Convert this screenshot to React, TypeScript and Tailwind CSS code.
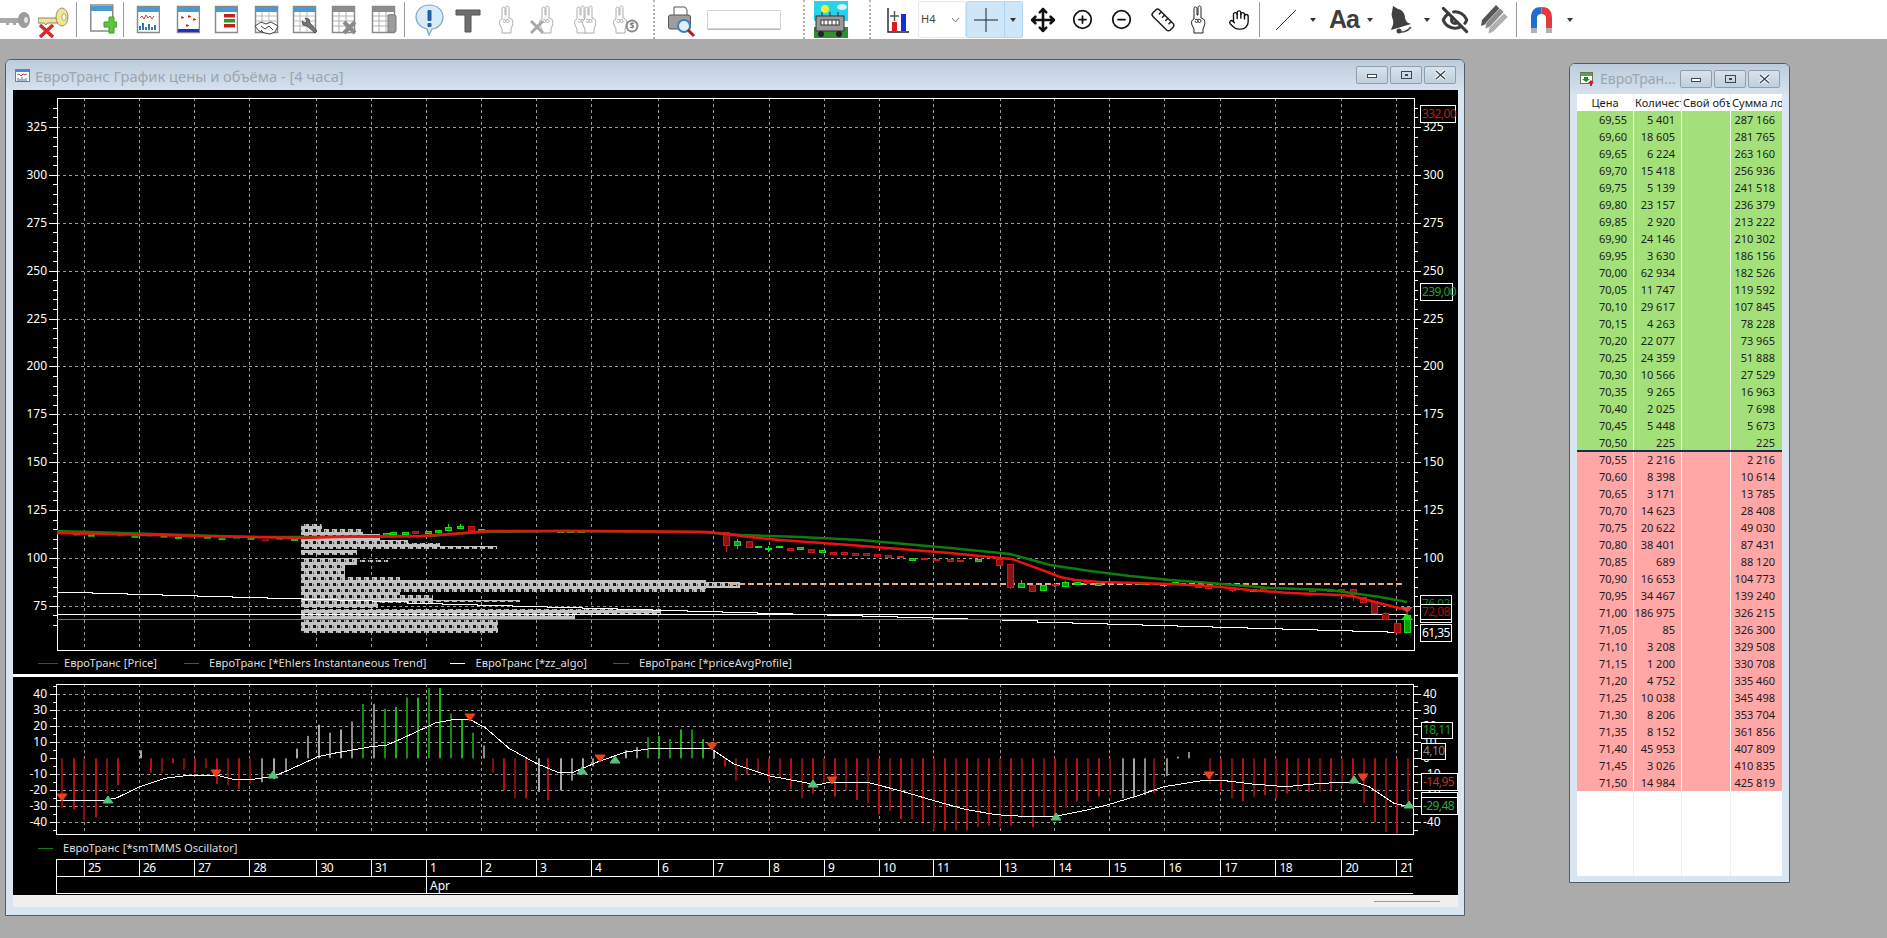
import { CircleMinus, CirclePlus, EyeOff, Hand, Move, Ruler } from "lucide-react";

const font = { fontFamily: '"Noto Sans", sans-serif' };

const gridX = [84, 139, 194, 249.5, 316.5, 371, 426, 481, 536, 591, 658, 713, 769, 824, 879, 933, 1000, 1054.5, 1109.5, 1164.5, 1220.5, 1275.5, 1341.5, 1396.5];
const dayLabels = ["25", "26", "27", "28", "30", "31", "1", "2", "3", "4", "6", "7", "8", "9", "10", "11", "13", "14", "15", "16", "17", "18", "20", "21"];

const priceY = (v: number) => 127 + (325 - v) * 1.915;
const oscY = (v: number) => 758.3 - v * 1.6;

const pts = (list: number[][]) => list.map(p => p.join(",")).join(" ");

const redLine = [[57, 533], [200, 536], [302, 538], [334, 537], [420, 536], [450, 534], [490, 531], [600, 531], [710, 532], [750, 537], [780, 540], [850, 545], [900, 549], [950, 553], [1000, 558], [1012, 559], [1050, 573], [1060, 577], [1075, 580], [1100, 582], [1170, 584], [1210, 586], [1250, 590], [1290, 593], [1340, 595], [1352, 596], [1375, 602], [1407, 610]];
const greenLine = [[57, 531], [250, 537], [302, 537], [430, 536], [480, 532], [560, 531], [700, 532], [740, 535], [800, 537], [860, 540], [950, 548], [1010, 554], [1050, 565], [1090, 571], [1130, 576], [1170, 580], [1210, 583], [1270, 588], [1330, 590], [1380, 597], [1407, 602]];

// stepped zz_algo line
const zzLine = (() => {
  const out: number[][] = [];
  for (let x = 57; x < 1400; x += 35) {
    const y = Math.round(592 + ((x - 57) / 1343) * 40.5);
    out.push([x, y], [Math.min(x + 35, 1400), y]);
  }
  return out;
})();

// [x, top, bottom, wickTop, wickBottom, kind]
type Candle = [number, number, number, number, number, "g" | "r"];
const candles: Candle[] = [
  [386, 533, 535, 533, 535, "g"], [393, 532, 534, 532, 534, "g"], [405, 532, 534, 532, 534, "g"], [415, 531, 533, 531, 533, "r"],
  [428, 531, 533, 531, 533, "g"], [438, 530, 532, 530, 532, "g"], [448, 527, 530, 524, 530, "g"], [460, 526, 528, 524, 528, "g"],
  [471, 526, 530, 526, 530, "r"], [481, 529, 531, 529, 531, "g"], [560, 531, 532, 531, 532, "g"], [570, 530, 532, 530, 532, "g"], [581, 530, 532, 530, 532, "g"],
  [726, 532, 545, 532, 552, "r"], [737, 541, 545, 539, 549, "g"], [749, 541, 547, 541, 547, "r"], [758, 546, 547, 546, 547, "g"], [768, 548, 549, 546, 552, "g"], [779, 546, 547, 546, 547, "g"],
  [790, 548, 550, 548, 550, "r"], [800, 547, 549, 547, 549, "g"], [811, 549, 552, 549, 552, "r"], [822, 550, 552, 550, 552, "g"], [833, 552, 554, 552, 554, "r"], [844, 552, 554, 552, 554, "r"],
  [855, 553, 555, 553, 555, "r"], [866, 553, 555, 553, 555, "r"], [877, 554, 556, 554, 556, "r"], [888, 555, 557, 555, 557, "r"], [900, 556, 557, 556, 557, "r"],
  [912, 558, 560, 558, 560, "g"], [924, 558, 559, 558, 559, "r"], [936, 559, 560, 559, 560, "r"], [950, 559, 561, 559, 561, "r"], [960, 560, 561, 560, 561, "r"], [978, 559, 561, 559, 561, "g"],
  [999, 559, 565, 559, 565, "r"], [1010, 564, 587, 564, 589, "r"], [1021, 583, 587, 580, 588, "g"], [1032, 585, 591, 585, 591, "r"], [1043, 585, 590, 585, 590, "g"],
  [1055, 584, 585, 583, 591, "r"], [1065, 582, 586, 581, 587, "g"], [1077, 582, 584, 582, 584, "g"], [1087, 581, 583, 581, 583, "r"], [1098, 583, 585, 583, 585, "g"],
  [1141, 582, 584, 582, 584, "g"], [1163, 583, 585, 583, 585, "g"], [1175, 582, 584, 582, 584, "g"], [1198, 585, 587, 585, 587, "r"], [1208, 586, 588, 586, 588, "r"],
  [1232, 587, 590, 587, 592, "r"], [1253, 589, 591, 589, 591, "g"], [1263, 588, 590, 588, 590, "r"], [1312, 589, 591, 589, 591, "r"], [1330, 589, 591, 589, 591, "r"], [1341, 589, 591, 589, 591, "r"],
  [1353, 589, 594, 589, 601, "r"], [1363, 597, 602, 597, 602, "r"], [1374, 601, 613, 601, 613, "r"], [1385, 613, 619, 612, 619, "r"], [1397, 623, 632, 623, 632, "r"], [1407, 615, 632, 615, 632, "g"],
];

// [y, height, right edge]
const profile = [
  [524, 5, 322], [529, 5, 363], [534, 6, 380], [540, 3, 408], [543, 3, 440], [546, 3, 497], [550, 5, 357],
  [558, 7, 357], [560, 2, 388], [565, 12, 345], [577, 3, 400], [580, 12, 706], [582, 6, 740], [592, 3, 400],
  [595, 8, 433], [600, 2, 520], [603, 5, 378], [609, 6, 661], [615, 5, 575], [620, 13, 498],
];

// [x, value, kind]
const oscBars: [number, number, string][] = [
  [61, -31, "r"], [73, -32, "r"], [83, -39, "r"], [95, -37, "r"], [106, -22, "r"], [117, -17, "r"], [140, 5, "a"], [150, -9, "r"], [161, -9, "r"], [172, -3, "r"], [183, -7, "r"], [194, -9, "r"],
  [205, -6, "r"], [216, -16, "r"], [227, -17, "r"], [238, -19, "r"], [249, -16, "r"], [261, -15, "a"], [273, -13, "a"], [285, -8, "a"], [296, 6, "a"], [307, 14, "a"], [318, 21, "a"], [329, 16, "a"],
  [340, 18, "a"], [351, 23, "a"], [362, 34, "g"], [373, 34, "a"], [384, 31, "g"], [395, 32, "g"], [406, 38, "g"], [417, 38, "g"], [428, 44, "g"], [439, 44, "g"], [450, 28, "g"], [461, 24, "g"],
  [472, 16, "g"], [483, 8, "a"], [492, -9, "r"], [503, -20, "r"], [514, -25, "r"], [525, -25, "r"], [538, -21, "a"], [547, -26, "r"], [560, -20, "a"], [571, -14, "a"], [582, -8, "a"], [592, -5, "a"],
  [625, 5, "a"], [636, 7, "a"], [647, 13, "g"], [658, 14, "g"], [669, 12, "g"], [680, 18, "g"], [691, 18, "g"], [702, 12, "g"], [713, 5, "a"],
  [724, -5, "r"], [735, -14, "r"], [746, -10, "r"], [757, -9, "r"], [768, -14, "r"], [779, -12, "r"], [790, -19, "r"], [801, -25, "r"], [812, -22, "r"], [823, -16, "r"], [834, -24, "r"], [845, -20, "r"],
  [856, -26, "r"], [867, -28, "r"], [878, -35, "r"], [889, -33, "r"], [900, -38, "r"], [911, -38, "r"], [922, -40, "r"], [933, -45, "r"], [944, -45, "r"], [955, -45, "r"], [966, -45, "r"], [977, -43, "r"],
  [988, -42, "r"], [999, -43, "r"], [1010, -42, "r"], [1021, -37, "r"], [1032, -43, "r"], [1043, -36, "r"], [1054, -36, "r"], [1065, -31, "r"], [1076, -27, "r"], [1087, -27, "r"], [1098, -24, "r"], [1109, -23, "r"],
  [1122, -25, "a"], [1133, -24, "a"], [1144, -23, "a"], [1153, -22, "r"], [1166, -11, "a"], [1177, 1, "a"], [1188, 4, "a"], [1209, -16, "r"], [1220, -20, "r"], [1231, -25, "r"], [1242, -27, "r"], [1253, -24, "r"],
  [1264, -23, "r"], [1275, -25, "r"], [1286, -22, "r"], [1297, -20, "r"], [1308, -21, "r"], [1319, -21, "r"], [1330, -20, "r"], [1341, -17, "r"], [1352, -16, "r"], [1363, -28, "r"], [1374, -40, "r"], [1385, -46, "r"], [1396, -47, "r"], [1407, -27, "r"],
];

const oscLine = [
  [56, 800.7], [107, 800], [117, 797.7], [140, 786.7], [165, 778.3], [191, 775], [216, 775], [233, 779.3], [253, 779.3], [272, 776.7], [285, 771.7], [318, 756.7], [337, 752.7], [371, 746.7], [387, 745],
  [406, 736.7], [436, 722.7], [457, 719], [471, 720], [486, 728.3], [509, 748.3], [536, 763.3], [559, 772.7], [572, 772.7], [600, 761], [626, 752], [656, 748], [710, 748], [734, 764], [770, 776], [818, 785], [830, 782], [866, 782], [900, 790.7],
  [934, 800.7], [965, 809.3], [996, 814.7], [1030, 816.7], [1057, 816], [1084, 810.7], [1107, 805], [1137, 796], [1164, 786.7], [1206, 780], [1225, 780.7], [1252, 784], [1286, 786.7], [1321, 783.3], [1355, 782], [1369, 786.7], [1394, 803.3], [1409, 806.7],
];

const downMarks = [[62, 799], [216, 775], [470, 719], [600, 760], [712, 748], [832, 782], [1209, 777], [1363, 779]];
const upMarks = [[108, 802], [273, 777], [582, 773], [615, 762], [813, 786], [1056, 819], [1354, 782], [1409, 807]];

function Grid({ lines, yTop, yBottom, values, toY }: { lines: number[]; yTop: number; yBottom: number; values: number[]; toY: (v: number) => number }) {
  return (
    <g stroke="#9c9c9c" strokeWidth="1" strokeDasharray="3 3" shapeRendering="crispEdges">
      {lines.map(x => <line key={x} x1={x} x2={x} y1={yTop} y2={yBottom} />)}
      {values.map(v => <line key={v} x1={57} x2={1414} y1={Math.round(toY(v))} y2={Math.round(toY(v))} />)}
    </g>
  );
}

function Tag({ x, y, w, h, text, color }: { x: number; y: number; w: number; h: number; text: string; color: string }) {
  return (
    <g>
      <rect x={x + 0.5} y={y + 0.5} width={w} height={h} fill="#000" stroke="#fff" />
      <text x={x + 2} y={y + h / 2 + 4} fill={color} fontSize="12" letterSpacing="-0.6">{text}</text>
    </g>
  );
}

function PriceChart() {
  const ticks: number[] = [];
  for (let v = 335; v >= 65; v -= 5) ticks.push(v);
  const labels = [325, 300, 275, 250, 225, 200, 175, 150, 125, 100, 75];
  return (
    <svg width="1445" height="561" viewBox="13 90 1445 561" className="block shrink-0" style={font}>
      <defs>
        <pattern id="dots" width="8" height="12" patternUnits="userSpaceOnUse">
          <rect width="8" height="12" fill="#c2c2c2" />
          <rect x="1" y="1" width="3" height="3" fill="#161616" />
          <rect x="5" y="7" width="3" height="3" fill="#161616" />
          <rect x="5" y="2" width="1" height="2" fill="#5a5a5a" />
          <rect x="1" y="8" width="1" height="2" fill="#5a5a5a" />
        </pattern>
      </defs>
      <Grid lines={gridX} yTop={98} yBottom={650} values={labels} toY={priceY} />
      {profile.map(([y, h, r]) => <rect key={`${y}-${r}`} x={301} y={y} width={r - 301} height={h} fill="url(#dots)" />)}
      <rect x="57" y="98" width="1357" height="552" fill="none" stroke="#fff" strokeWidth="1" shapeRendering="crispEdges" />
      {ticks.map(v => {
        const y = Math.round(priceY(v));
        const big = v % 25 === 0;
        return (
          <g key={v} stroke="#fff" shapeRendering="crispEdges">
            <line x1={big ? 49 : 53} x2={57} y1={y} y2={y} />
            <line x1={1414} x2={big ? 1421 : 1418} y1={y} y2={y} />
          </g>
        );
      })}
      {labels.map(v => (
        <g key={v} fill="#fff" fontSize="12">
          <text x={47} y={priceY(v) + 4} textAnchor="end">{v}</text>
          <text x={1423} y={priceY(v) + 4}>{v}</text>
        </g>
      ))}
      <polyline points={pts(zzLine)} fill="none" stroke="#fff" strokeWidth="1" shapeRendering="crispEdges" />
      <line x1="57" x2="1408" y1="614.5" y2="614.5" stroke="#fff" />
      <line x1="57" x2="1408" y1="619.5" y2="619.5" stroke="#22b022" />
      <line x1="730" x2="1403" y1="584" y2="584" stroke="#eda77c" strokeWidth="2" strokeDasharray="6 3" />
      {Array.from({ length: 17 }, (_, i) => 62 + i * 14.5).map((x, i) => (
        <rect key={x} x={x - 3} y={532 + (i * 3) / 8 + (i % 3)} width="7" height="2" fill={i % 5 === 4 ? "#a01515" : "#12c012"} />
      ))}
      {candles.map(([x, t, b, wt, wb, k]) => (
        <g key={`${x}-${t}`} stroke={k === "g" ? "#16e016" : "#d01818"} shapeRendering="crispEdges">
          <line x1={x} x2={x} y1={wt} y2={wb} />
          <rect x={x - 3} y={t} width="6" height={b - t} fill={k === "g" ? "#119a11" : "#8e1010"} />
        </g>
      ))}
      <polyline points={pts(greenLine)} fill="none" stroke="#0f7c0f" strokeWidth="2.5" />
      <polyline points={pts(redLine)} fill="none" stroke="#ee1111" strokeWidth="2.5" />
      <polygon points="1401,607 1413,607 1407,613" fill="#e83a2c" />
      <polygon points="1407,613 1401,620 1413,620" fill="#18e018" />
      <Tag x={1420} y={105} w={35} h={17} text="332,00" color="#c41a10" />
      <Tag x={1420} y={283} w={32} h={17} text="239,00" color="#22a022" />
      <Tag x={1420} y={595} w={31} h={17} text="76,92" color="#0f7c0f" />
      <Tag x={1420} y={604} w={31} h={15} text="72,08" color="#b01010" />
      <rect x="1420.5" y="619.5" width="31" height="3" fill="#000" stroke="#fff" />
      <Tag x={1420} y={624} w={31} h={17} text="61,35" color="#fff" />
    </svg>
  );
}

function OscChart() {
  const ticks: number[] = [];
  for (let v = 45; v >= -45; v -= 5) ticks.push(v);
  const labels = [40, 30, 20, 10, 0, -10, -20, -30, -40];
  return (
    <svg width="1445" height="161" viewBox="13 677 1445 161" className="block shrink-0" style={font}>
      <Grid lines={gridX} yTop={684} yBottom={834} values={labels.filter(v => v !== 0)} toY={oscY} />
      {oscBars.map(([x, v, k], i) => (
        <rect
          key={x}
          x={x}
          y={Math.min(oscY(v), oscY(0))}
          width="2"
          height={Math.abs(v) * 1.6}
          fill={k === "r" ? (i % 2 ? "#b81010" : "#820f0f") : k === "g" ? (i % 2 ? "#10b810" : "#148c14") : i % 2 ? "#8a8a8a" : "#a6a6a6"}
        />
      ))}
      <rect x="56.5" y="684.5" width="1357" height="150" fill="none" stroke="#fff" shapeRendering="crispEdges" />
      {ticks.map(v => {
        const y = Math.round(oscY(v));
        const big = v % 10 === 0;
        return (
          <g key={v} stroke="#fff" shapeRendering="crispEdges">
            <line x1={big ? 50 : 53} x2={57} y1={y} y2={y} />
            <line x1={1414} x2={big ? 1421 : 1418} y1={y} y2={y} />
          </g>
        );
      })}
      {labels.map(v => (
        <g key={v} fill="#fff" fontSize="12">
          <text x={47} y={oscY(v) + 4} textAnchor="end">{v}</text>
          <text x={1423} y={oscY(v) + 4}>{v}</text>
        </g>
      ))}
      <polyline points={pts(oscLine)} fill="none" stroke="#fff" strokeWidth="1" shapeRendering="crispEdges" />
      {downMarks.map(([x, y]) => <polygon key={x} points={`${x - 5},${y - 5} ${x + 5},${y - 5} ${x},${y + 2}`} fill="#f0401a" stroke="#f0401a" />)}
      {upMarks.map(([x, y]) => <polygon key={x} points={`${x},${y - 6} ${x - 5},${y + 1} ${x + 5},${y + 1}`} fill="#52c47c" stroke="#52c47c" />)}
      <Tag x={1421} y={722} w={31} h={16} text="18,11" color="#14a014" />
      <Tag x={1421} y={743} w={24} h={16} text="4,10" color="#8a8a8a" />
      <Tag x={1421} y={773} w={36} h={17} text="-14,95" color="#c8301c" />
      <rect x="1421.5" y="792.5" width="36" height="6" fill="#000" stroke="#fff" />
      <Tag x={1421} y={797} w={36} h={17} text="-29,48" color="#2fa84a" />
    </svg>
  );
}

function DateScale() {
  return (
    <svg width="1445" height="36" viewBox="13 859 1445 36" className="block shrink-0" style={font}>
      <g stroke="#fff" shapeRendering="crispEdges">
        <line x1="56" x2="1413" y1="859.5" y2="859.5" />
        <line x1="56" x2="1413" y1="876.5" y2="876.5" />
        <line x1="56" x2="1413" y1="893.5" y2="893.5" />
        <line x1="56.5" x2="56.5" y1="859" y2="894" />
        <line x1="426" x2="426" y1="876" y2="894" />
        {gridX.map(x => <line key={x} x1={x} x2={x} y1="859" y2="877" />)}
      </g>
      {dayLabels.map((d, i) => (
        <text key={d} x={gridX[i] + 4} y={872} fill="#fff" fontSize="12" letterSpacing="-0.6">{d}</text>
      ))}
      <text x="430" y="890" fill="#fff" fontSize="12">Apr</text>
    </svg>
  );
}

function Legend({ children, className }: { children: React.ReactNode; className: string }) {
  return <div className={`flex shrink-0 items-center text-[11.2px] text-[#dedede] ${className}`} style={font}>{children}</div>;
}

function WinButton({ children }: { children: React.ReactNode }) {
  return (
    <div className="flex h-[18px] w-[32px] items-center justify-center rounded-[2px] border border-[#8f9fae] bg-gradient-to-b from-[#d8e2ec] to-[#c0cfdd]">
      {children}
    </div>
  );
}

function WinButtons() {
  return (
    <div className="flex shrink-0 gap-[2px]">
      <WinButton><div className="mt-[2px] h-[4px] w-[10px] border border-[#3a4652] bg-white" /></WinButton>
      <WinButton><div className="flex h-[8px] w-[11px] items-center justify-center border border-[#3a4652]"><div className="h-[2px] w-[3px] bg-[#3a4652]" /></div></WinButton>
      <WinButton>
        <svg width="13" height="10" viewBox="0 0 13 10"><path d="M2 1l9 8M11 1L2 9" stroke="#fff" strokeWidth="3.5" /><path d="M2 1l9 8M11 1L2 9" stroke="#3a4652" strokeWidth="1.4" /></svg>
      </WinButton>
    </div>
  );
}

function ChartWindow() {
  return (
    <div className="flex h-[857px] w-[1460px] shrink-0 flex-col rounded-t-[6px] border border-[#505c68] bg-[#d9e5f1] px-[7px] pb-[8px]">
      <div className="-mx-[7px] flex h-[30px] shrink-0 items-center justify-between rounded-t-[5px] bg-gradient-to-b from-[#bdccdc] to-[#d5e1ee] pl-[9px] pr-[8px]">
        <div className="flex items-center pt-[2px]">
          <svg width="15" height="13" viewBox="0 0 15 13">
            <rect x="0.5" y="0.5" width="14" height="12" fill="#fff" stroke="#6d7f90" />
            <rect x="1" y="1" width="13" height="2" fill="#3e8fd0" />
            <path d="M2 6l2-1 2 2 2-2 2 1 2-1" stroke="#c44" fill="none" />
            <path d="M3 12V9M5 12V10M7 12V8M9 12V10M11 12V9" stroke="#3e6ea8" />
          </svg>
          <span className="ml-[5px] text-[14.7px] text-[#9ba6b1]" style={font}>ЕвроТранс График цены и объёма - [4 часа]</span>
        </div>
        <WinButtons />
      </div>
      <div className="flex w-[1445px] flex-1 flex-col bg-black">
        <PriceChart />
        <Legend className="h-[23px] pt-[2px]">
          <div className="ml-[25px] h-px w-[20px] bg-[#a52020]" />
          <span className="ml-[6px]">ЕвроТранс [Price]</span>
          <div className="ml-[27px] h-px w-[15px] bg-[#118011]" />
          <span className="ml-[10px]">ЕвроТранс [*Ehlers Instantaneous Trend]</span>
          <div className="ml-[24px] h-px w-[15px] bg-white" />
          <span className="ml-[10px]">ЕвроТранс [*zz_algo]</span>
          <div className="ml-[26px] h-px w-[16px] bg-[#8b3a20]" />
          <span className="ml-[10px]">ЕвроТранс [*priceAvgProfile]</span>
        </Legend>
        <div className="h-[3px] w-[1445px] shrink-0 bg-white" />
        <OscChart />
        <Legend className="h-[21px]">
          <div className="ml-[25px] h-px w-[15px] bg-[#118011]" />
          <span className="ml-[10px]">ЕвроТранс [*smTMMS Oscillator]</span>
        </Legend>
        <DateScale />
      </div>
      <div className="flex h-[12px] w-[1445px] shrink-0 items-center justify-end bg-[#f0f0f0] pr-[18px]">
        <div className="h-px w-[66px] bg-[#9a9a9a]" />
      </div>
    </div>
  );
}

const bids = [
  ["69,55", "5 401", "287 166"], ["69,60", "18 605", "281 765"], ["69,65", "6 224", "263 160"], ["69,70", "15 418", "256 936"], ["69,75", "5 139", "241 518"],
  ["69,80", "23 157", "236 379"], ["69,85", "2 920", "213 222"], ["69,90", "24 146", "210 302"], ["69,95", "3 630", "186 156"], ["70,00", "62 934", "182 526"],
  ["70,05", "11 747", "119 592"], ["70,10", "29 617", "107 845"], ["70,15", "4 263", "78 228"], ["70,20", "22 077", "73 965"], ["70,25", "24 359", "51 888"],
  ["70,30", "10 566", "27 529"], ["70,35", "9 265", "16 963"], ["70,40", "2 025", "7 698"], ["70,45", "5 448", "5 673"], ["70,50", "225", "225"],
];
const asks = [
  ["70,55", "2 216", "2 216"], ["70,60", "8 398", "10 614"], ["70,65", "3 171", "13 785"], ["70,70", "14 623", "28 408"], ["70,75", "20 622", "49 030"],
  ["70,80", "38 401", "87 431"], ["70,85", "689", "88 120"], ["70,90", "16 653", "104 773"], ["70,95", "34 467", "139 240"], ["71,00", "186 975", "326 215"],
  ["71,05", "85", "326 300"], ["71,10", "3 208", "329 508"], ["71,15", "1 200", "330 708"], ["71,20", "4 752", "335 460"], ["71,25", "10 038", "345 498"],
  ["71,30", "8 206", "353 704"], ["71,35", "8 152", "361 856"], ["71,40", "45 953", "407 809"], ["71,45", "3 026", "410 835"], ["71,50", "14 984", "425 819"],
];

function BookRow({ row, bg }: { row: string[]; bg: string }) {
  return (
    <div className={`grid h-[17px] grid-cols-[57px_48px_49px_51px] text-right leading-[17px] text-[#1c1c1c] ${bg}`}>
      <div className="border-r border-white pr-[6px]">{row[0]}</div>
      <div className="border-r border-white pr-[6px]">{row[1]}</div>
      <div className="border-r border-white" />
      <div className="pr-[7px]">{row[2]}</div>
    </div>
  );
}

function BookWindow() {
  return (
    <div className="mt-[4px] flex h-[820px] w-[221px] shrink-0 flex-col rounded-t-[6px] border border-[#505c68] bg-[#d9e5f1] px-[7px] pb-[6px]">
      <div className="-mx-[7px] flex h-[30px] shrink-0 items-center justify-between rounded-t-[5px] bg-gradient-to-b from-[#bdccdc] to-[#d5e1ee] pl-[7px] pr-[9px]">
        <div className="flex min-w-0 items-center pl-[3px]">
          <svg width="15" height="14" viewBox="0 0 15 14" className="shrink-0">
            <rect x="0.5" y="0.5" width="12" height="11" fill="#fff" stroke="#5f7d55" />
            <rect x="1" y="1" width="11" height="3" fill="#5aa34a" />
            <path d="M4 5h4v2h2l-4 3-4-3h2z" fill="#1c8c2c" />
            <path d="M11 8l3 3h-2v3h-2v-3H8z" fill="#d81c2c" />
          </svg>
          <span className="ml-[5px] whitespace-nowrap text-[14px] leading-none text-[#9ba6b1]" style={font}>ЕвроТран...</span>
        </div>
        <WinButtons />
      </div>
      <div className="flex w-[205px] flex-1 flex-col bg-white text-[11px]" style={font}>
        <div className="grid h-[17px] shrink-0 grid-cols-[57px_48px_49px_51px] overflow-hidden leading-[17px] text-[#1c1c1c]">
          <div className="border-r border-[#eeeeee] text-center">Цена</div>
          <div className="overflow-hidden whitespace-nowrap border-r border-[#eeeeee] pl-[1px]">Количество</div>
          <div className="overflow-hidden whitespace-nowrap border-r border-[#eeeeee] pl-[1px]">Свой объём</div>
          <div className="overflow-hidden whitespace-nowrap pl-[1px]">Сумма лотов</div>
        </div>
        {bids.map(row => <BookRow key={row[0]} row={row} bg="bg-[#a4e07a]" />)}
        <div className="relative -my-px h-[2px] bg-[#1d2b52]" />
        {asks.map(row => <BookRow key={row[0]} row={row} bg="bg-[#ffa6a6]" />)}
        <div className="grid flex-1 grid-cols-[57px_48px_49px_51px]">
          <div className="border-r border-[#eeeeee]" />
          <div className="border-r border-[#eeeeee]" />
          <div className="border-r border-[#eeeeee]" />
        </div>
      </div>
    </div>
  );
}

function Sep({ className }: { className: string }) {
  return <div className={`h-[35px] w-px shrink-0 bg-[#9a9a9a] ${className}`} />;
}
function DotSep({ className }: { className: string }) {
  return <div className={`h-[39px] w-[2px] shrink-0 border-l-2 border-dotted border-[#b5b5b5] ${className}`} />;
}
function Caret({ className }: { className: string }) {
  return <div className={`h-0 w-0 shrink-0 border-x-[3.5px] border-t-[4px] border-x-transparent border-t-[#333] ${className}`} />;
}

function TableIcon({ className, children, width = 27 }: { className: string; children?: React.ReactNode; width?: number }) {
  return (
    <svg width={width} height="30" viewBox={`0 0 ${width} 30`} className={`shrink-0 ${className}`}>
      <rect x="1.5" y="1.5" width="22" height="26" fill="#fff" stroke="#8a8a8a" strokeWidth="1.5" />
      <rect x="2" y="2" width="21" height="5" fill="#4a9bd1" />
      {children}
    </svg>
  );
}

function Finger({ className, x, s, extra, width = 16 }: { className: string; x?: boolean; s?: boolean; extra?: boolean; width?: number }) {
  const hand = "M4 14V3.5C4 1.5 7 1.5 7 3.5V10H8V2.5C8 .5 11 .5 11 2.5V13L13.5 14C15 15 15 18 14.5 20L13 24V28H4V24L2 20C1 17 1.5 15 4 14ZM5 15C6 14 8 14 8 16S5 18 5 16M8 15C9 14 11 14 11 16S8 18 8 16";
  return (
    <svg width={width} height="30" viewBox={`0 0 ${width} 30`} className={`shrink-0 ${className}`}>
      {extra && <path d={hand} fill="#fff" stroke="#b0b0b0" />}
      <path d={hand} transform={extra ? "translate(8 0)" : x ? "translate(8 0)" : undefined} fill="#fff" stroke="#adadad" />
      {x && <path d="M1 16l12 12M13 16L1 28" stroke="#a8a8a8" strokeWidth="3" />}
      {s && (
        <g>
          <circle cx="20" cy="21" r="6.5" fill="#8c8c8c" />
          <circle cx="20" cy="21" r="4.5" fill="#fff" />
          <text x="20" y="24" textAnchor="middle" fontSize="8" fontWeight="700" fill="#777" style={font}>$</text>
        </g>
      )}
    </svg>
  );
}

function Toolbar() {
  return (
    <div className="flex h-[39px] shrink-0 items-center overflow-hidden bg-white">
      <svg width="31" height="20" viewBox="0 0 31 20" className="shrink-0">
        <path d="M0 8h19v5h-3v2h-3v-2H9v2H6v-2H0z" fill="#a9a9a9" />
        <ellipse cx="24" cy="10" rx="6" ry="8" fill="#9c9c9c" />
        <ellipse cx="26" cy="10" rx="2" ry="3" fill="#e4e4e4" />
      </svg>
      <svg width="31" height="36" viewBox="0 0 31 36" className="ml-[7px] shrink-0">
        <path d="M0 16h20v5H9l-1 2-2-2H0z" fill="#f2e59a" stroke="#555" strokeWidth="0.7" />
        <ellipse cx="24" cy="15" rx="6" ry="9" fill="#f3e88a" stroke="#666" strokeWidth="0.7" />
        <ellipse cx="26" cy="15" rx="2" ry="3.5" fill="#fff" stroke="#777" strokeWidth="0.6" />
        <path d="M2 23l13 12M15 23L2 35" stroke="#d8282c" strokeWidth="3.5" />
      </svg>
      <Sep className="ml-[7px]" />
      <svg width="27" height="33" viewBox="0 0 27 33" className="ml-[13px] shrink-0">
        <rect x="0.75" y="2" width="22" height="26" fill="#fff" stroke="#8a8a8a" strokeWidth="1.5" />
        <rect x="1" y="3" width="21" height="5" fill="#4a9bd1" />
        <path d="M14 19h5v-5h5v5h3v5h-3v6h-5v-6h-5z" fill="#5fc63c" stroke="#3f9a28" />
      </svg>
      <Sep className="ml-[6px]" />
      <TableIcon className="ml-[12px]" width={24}>
        <path d="M4 13l2-2 2 3 2-4 2 3 2-2 2 3 2-3" fill="none" stroke="#c0474a" />
        <path d="M4 25v-4M7 25v-7M10 25v-3M13 25v-6M16 25v-3M19 25v-5" stroke="#2f76b5" strokeWidth="2" />
      </TableIcon>
      <TableIcon className="ml-[16px]" width={24}>
        <rect x="2" y="24" width="21" height="3" fill="#2030c0" />
        <path d="M6 11v3M5 12.5h3M13 10v3M12 11.5h3M18 13v3M17 14.5h3M11 19v3M10 20.5h3" stroke="#d02020" />
      </TableIcon>
      <TableIcon className="ml-[14px]" width={24}>
        <rect x="10" y="9" width="11" height="3.5" fill="#c02020" />
        <rect x="10" y="14" width="11" height="3.5" fill="#2a9a2a" />
        <rect x="10" y="19" width="11" height="3.5" fill="#c02020" />
      </TableIcon>
      <TableIcon className="ml-[16px]" width={26}>
        <path d="M2 11h21M2 16h21M8 7v14M15 7v14" stroke="#bbb" />
        <path d="M1 21l6-4 5 2 5-2 7 4-3 6-5 2-5-1-6-2z" fill="#fff" stroke="#444" />
        <path d="M7 21l4 3 4-3 4 4M10 28l-3-3" fill="none" stroke="#444" />
      </TableIcon>
      <TableIcon className="ml-[12px]">
        <path d="M2 11h21M2 16h21M2 21h21M8 7v20M15 7v20" stroke="#bbb" />
        <path d="M13 13l4 1 1 4 7 8-2 2-8-7-4-1-1-4 3 2 2-2z" fill="#777" stroke="#333" strokeWidth="0.7" />
      </TableIcon>
      <TableIcon className="ml-[12px]">
        <rect x="2" y="2" width="21" height="5" fill="#8c8c8c" />
        <path d="M2 11h21M2 16h21M2 21h21M8 7v20M15 7v20" stroke="#b0b0b0" />
        <path d="M13 17l11 11M24 17L13 28" stroke="#8a8a8a" strokeWidth="4" />
      </TableIcon>
      <TableIcon className="ml-[13px]" width={26}>
        <rect x="2" y="2" width="21" height="5" fill="#8c8c8c" />
        <path d="M2 11h21M2 16h21M2 21h21M8 7v20M15 7v20" stroke="#b0b0b0" />
        <path d="M17 10c4-1 8 0 8 1v15c0 1-4 2-8 1z" fill="#9c9c9c" stroke="#777" />
      </TableIcon>
      <Sep className="ml-[7px]" />
      <svg width="29" height="34" viewBox="0 0 29 34" className="ml-[10px] shrink-0">
        <path d="M14.5 2C22 2 28 7 28 14c0 7-6 12-11 12l-3 6-2-6C6 25 1 20 1 14 1 7 7 2 14.5 2z" fill="#d8ecf8" stroke="#7aa6c4" strokeWidth="1.2" />
        <rect x="12.5" y="7" width="4" height="11" rx="1" fill="#1f5fa8" />
        <rect x="12.5" y="20" width="4" height="4" rx="1" fill="#1f5fa8" />
      </svg>
      <svg width="26" height="26" viewBox="0 0 26 26" className="ml-[11px] shrink-0">
        <path d="M1 3h24v5H16v17h-6V8H1z" fill="#6e6e6e" stroke="#555" />
      </svg>
      <Finger className="ml-[17px]" />
      <Finger className="ml-[16px]" x width={24} />
      <Finger className="ml-[19px]" extra width={23} />
      <Finger className="ml-[16px]" s width={27} />
      <DotSep className="ml-[14px]" />
      <svg width="29" height="36" viewBox="0 0 29 36" className="ml-[12px] shrink-0">
        <path d="M7 5h11l2 3v8H7z" fill="#fff" stroke="#555" />
        <rect x="1.5" y="13" width="22" height="14" rx="2" fill="#9e9e9e" stroke="#555" />
        <circle cx="17" cy="24" r="6" fill="#dff0fb" stroke="#3c84b8" strokeWidth="2" />
        <path d="M21 28l6 6" stroke="#c01818" strokeWidth="3" />
      </svg>
      <div className="ml-[11px] h-[19px] w-[74px] shrink-0 rounded-[1px] border border-[#d4d4d4] shadow-[0_1px_0_#bdbdbd]" />
      <DotSep className="ml-[22px]" />
      <svg width="34" height="37" viewBox="0 0 34 37" className="ml-[9px] shrink-0">
        <rect width="34" height="20" fill="#27d2ea" />
        <circle cx="11" cy="8" r="4" fill="#f2ee3c" />
        <rect y="26" width="34" height="11" fill="#2f8f2f" />
        <rect x="2" y="15" width="28" height="15" fill="#9a9a9a" stroke="#333" />
        <rect x="7" y="19" width="18" height="5" fill="#fff" stroke="#333" />
        <path d="M10 19v5M14 19v5M18 19v5M22 19v5" stroke="#333" />
        <path d="M8 15v-4M16 15v-4M24 15v-4" stroke="#333" />
        <circle cx="7" cy="33" r="3" fill="#222" />
        <circle cx="25" cy="33" r="3" fill="#222" />
        <ellipse cx="28" cy="6" rx="5" ry="3" fill="#fff" opacity="0.8" />
      </svg>
      <DotSep className="ml-[21px]" />
      <svg width="22" height="28" viewBox="0 0 22 28" className="ml-[16px] shrink-0">
        <path d="M1 2v24h21" fill="none" stroke="#222" strokeWidth="1.4" />
        <rect x="5" y="16" width="5" height="9" fill="#e01a1a" />
        <rect x="14" y="8" width="5" height="17" fill="#1a2ad8" />
        <path d="M7.5 5v10M3 10h9" stroke="#555" strokeWidth="1.4" />
      </svg>
      <div className="ml-[9px] flex h-[37px] w-[48px] shrink-0 items-center justify-between rounded-[2px] border border-[#e8e8e8] pl-[2px] pr-[5px] text-[11px] text-[#444]" style={font}>
        <span>H4</span>
        <svg width="9" height="6" viewBox="0 0 9 6"><path d="M1 1l3.5 4L8 1" fill="none" stroke="#777" /></svg>
      </div>
      <div className="flex h-[37px] w-[57px] shrink-0 items-center rounded-[2px] border border-[#b5d9f2] bg-[#cfe6f8]">
        <div className="flex h-full w-[38px] items-center justify-center border-r border-[#b0d4ee]">
          <svg width="24" height="24" viewBox="0 0 24 24"><path d="M12 0v24M0 12h24" stroke="#222" strokeWidth="1" /></svg>
        </div>
        <Caret className="ml-[5px] border-t-[#1f2a3a]" />
      </div>
      <Move className="ml-[7px] shrink-0 text-[#111]" size={26} strokeWidth={2.4} />
      <CirclePlus className="ml-[16px] shrink-0 text-[#111]" size={21} strokeWidth={2} />
      <CircleMinus className="ml-[18px] shrink-0 text-[#111]" size={21} strokeWidth={2} />
      <Ruler className="ml-[18px] shrink-0 text-[#222]" size={26} strokeWidth={1.4} />
      <Finger className="ml-[14px] [&>path]:stroke-[#222]" />
      <Hand className="ml-[22px] shrink-0 text-[#111]" size={22} strokeWidth={1.5} />
      <Sep className="ml-[9px]" />
      <svg width="20" height="20" viewBox="0 0 20 20" className="ml-[16px] shrink-0"><path d="M0 20L20 0" stroke="#333" /></svg>
      <Caret className="ml-[14px]" />
      <span className="ml-[13px] w-[29px] shrink-0 text-[25px] font-bold leading-none tracking-[-1px] text-[#3e3e3e]" style={{ fontFamily: '"Liberation Sans", sans-serif' }}>Aa</span>
      <Caret className="ml-[9px]" />
      <svg width="24" height="28" viewBox="0 0 24 28" className="ml-[16px] shrink-0">
        <path d="M4 0l5 3c5 1 7 5 7 9 1 4 3 5 6 6L2 24c1-3 3-6 2-10-1-3-2-5-1-8z" fill="#404040" />
        <path d="M10 25c3 2 8 1 12-4" fill="none" stroke="#404040" strokeWidth="1.5" />
        <circle cx="10" cy="25" r="2.5" fill="#404040" />
      </svg>
      <Caret className="ml-[11px]" />
      <EyeOff className="ml-[11px] shrink-0 text-[#3c3c3c]" size={28} strokeWidth={2.6} />
      <svg width="30" height="31" viewBox="0 0 30 31" className="ml-[10px] shrink-0">
        <path d="M17 1l4 4L7 20l-5 2 1-6z" fill="#555" />
        <path d="M21 4l4 4-14 15-5 2 1-6z" fill="#8c8c8c" stroke="#fff" strokeWidth="0.6" />
        <path d="M25 9l4 4-15 15-5 2 1-6z" fill="#b0b0b0" stroke="#fff" strokeWidth="0.6" />
      </svg>
      <Sep className="ml-[7px]" />
      <svg width="23" height="27" viewBox="0 0 23 27" className="ml-[13px] shrink-0">
        <path d="M1 22V12C1 4 5 1 11.5 1V8C9 8 7 9 7 12v10z" fill="#1f6fd0" />
        <path d="M22 22V12C22 4 18 1 11.5 1V8C14 8 16 9 16 12v10z" fill="#e23a3a" />
        <rect x="1" y="22" width="6" height="5" fill="#b0b0b0" />
        <rect x="16" y="22" width="6" height="5" fill="#b0b0b0" />
      </svg>
      <Caret className="ml-[14px]" />
    </div>
  );
}

export default function App() {
  return (
    <div className="flex h-[938px] w-[1887px] flex-col overflow-hidden bg-[#ababab]">
      <Toolbar />
      <div className="flex items-start pl-[5px] pt-[20px]">
        <ChartWindow />
        <div className="ml-[104px]"><BookWindow /></div>
      </div>
    </div>
  );
}
